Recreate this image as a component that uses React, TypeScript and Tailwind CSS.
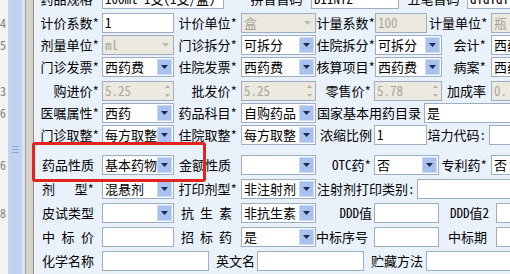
import clsx from 'clsx';
import type { ReactNode } from 'react';

type Kind = 'text' | 'combo' | 'spin';

interface FieldProps {
  className?: string;
  kind?: Kind;
  value?: string;
  disabled?: boolean;
}

function Arrow({ color }: { color: string }) {
  return (
    <svg width="7" height="4" viewBox="0 0 7 4">
      <path d="M0 0h7L3.5 4z" fill={color} />
    </svg>
  );
}

function Field({ className = '', kind = 'text', value = '', disabled = false }: FieldProps) {
  return (
    <div
      className={clsx(
        'flex h-[20px] shrink-0 items-center overflow-hidden border border-[#9eaec0]',
        disabled ? 'bg-[#ebe9e0] text-[#a9a69c]' : 'bg-white text-black',
        className,
      )}
    >
      <span className="min-w-0 flex-1 overflow-hidden whitespace-nowrap pl-[2px] leading-[18px]">{value}</span>
      {kind === 'combo' &&
        (disabled ? (
          <span className="flex h-[16px] w-[15px] shrink-0 items-center justify-center">
            <Arrow color="#bdb9ad" />
          </span>
        ) : (
          <span className="mr-[1px] flex h-[16px] w-[15px] shrink-0 items-center justify-center border border-[#c9d8f5] bg-[#a9c1ef]">
            <Arrow color="#1c2850" />
          </span>
        ))}
      {kind === 'spin' && (
        <span className="flex h-full w-[12px] shrink-0 flex-col items-center justify-between py-[3px]">
          <svg width="5" height="3" viewBox="0 0 5 3">
            <path d="M0 3h5L2.5 0z" fill="#b4b1a7" />
          </svg>
          <svg width="5" height="3" viewBox="0 0 5 3">
            <path d="M0 0h5L2.5 3z" fill="#b4b1a7" />
          </svg>
        </span>
      )}
    </div>
  );
}

function Lbl({ className = '', children }: { className?: string; children: ReactNode }) {
  return <div className={clsx('shrink-0 whitespace-nowrap leading-[20px]', className)}>{children}</div>;
}

function Spaced({ className = '', parts }: { className?: string; parts: string[] }) {
  return (
    <div className={clsx('flex shrink-0 justify-between whitespace-nowrap leading-[20px]', className)}>
      {parts.map((p) => (
        <span key={p}>{p}</span>
      ))}
    </div>
  );
}

function Row({ className = '', children }: { className?: string; children: ReactNode }) {
  return <div className={clsx('flex h-[20px] shrink-0 items-center', className)}>{children}</div>;
}

export default function App() {
  return (
    <div className="relative flex h-[274px] w-[510px] overflow-hidden bg-[#e9f2fb] font-['Noto_Sans_Mono_CJK_SC','Noto_Sans_CJK_SC',sans-serif] text-[13px] text-black">
      {/* left list edge + scrollbar */}
      <div className="flex h-full w-[35px] shrink-0">
        <div className="flex w-[8px] flex-col overflow-hidden bg-[#f3f3f3] text-[12px] leading-[20px] text-[#7d7d7d]">
          <span className="mt-[13px] h-[20px]">4</span>
          <span className="mt-[2px] h-[20px]">5</span>
          <span className="mt-[26px] h-[20px]">3</span>
          <span className="mt-[2px] h-[20px]">6:</span>
          <span className="mt-[32px] h-[20px]">6·</span>
          <span className="mt-[28px] h-[20px]">8</span>
        </div>
        <div className="w-[1px] bg-[#cfd6e2]" />
        <div className="flex w-[13px] flex-col items-center bg-[#c2d3f1]">
          <div className="mt-[146px] flex w-[7px] flex-col gap-[2px]">
            <div className="h-[1px] bg-[#8ea6d3]" />
            <div className="h-[1px] bg-[#8ea6d3]" />
            <div className="h-[1px] bg-[#8ea6d3]" />
          </div>
        </div>
        <div className="w-[3px] bg-[#dbe4f2]" />
        <div className="w-[1px] bg-[#9a9a9a]" />
        <div className="w-[7px] bg-[#d6d2ca]" />
        <div className="w-[1px] bg-[#8a8a8a]" />
        <div className="w-[1px] bg-[#f4f4f4]" />
      </div>

      {/* form */}
      <div className="min-w-0 flex-1 overflow-hidden">
        <div className="-ml-[1px] -mt-[11px] flex flex-col">
          <Row>
            <Lbl className="w-[68px] pr-[3px] text-right">药品规格*</Lbl>
            <Field className="w-[122px]" value="100ml*1支(1支/盒)" />
            <Lbl className="w-[87px] pr-[2px] text-right">拼音首码*</Lbl>
            <Field className="w-[88px]" value="DIINTZ" />
            <Lbl className="w-[68px] pr-[1px] text-right">五笔首码*</Lbl>
            <Field className="w-[60px]" value="dididi" />
          </Row>

          <Row className="mt-[4px]">
            <Lbl className="w-[68px] pr-[3px] text-right">计价系数*</Lbl>
            <Field className="w-[72px]" value="1" />
            <Lbl className="w-[67px] pr-[4px] text-right">计价单位*</Lbl>
            <Field className="w-[75px]" kind="combo" disabled value="盒" />
            <Lbl className="w-[59px] text-right">计量系数*</Lbl>
            <Field className="w-[52px]" disabled value="100" />
            <Lbl className="w-[64px] pl-[2px]">计量单位*</Lbl>
            <Field className="w-[40px]" disabled value="瓶" />
          </Row>

          <Row className="mt-[2px]">
            <Lbl className="w-[68px] pr-[3px] text-right">剂量单位*</Lbl>
            <Field className="w-[72px]" kind="combo" disabled value="ml" />
            <Lbl className="w-[67px] pr-[4px] text-right">门诊拆分*</Lbl>
            <Field className="w-[75px]" kind="combo" value="可拆分" />
            <Lbl className="w-[59px] text-right">住院拆分*</Lbl>
            <Field className="w-[67px]" kind="combo" value="可拆分" />
            <Lbl className="w-[49px] pr-[5px] text-right">会计*</Lbl>
            <Field className="w-[40px]" value="西药" />
          </Row>

          <Row className="mt-[2px]">
            <Lbl className="w-[68px] pr-[3px] text-right">门诊发票*</Lbl>
            <Field className="w-[72px]" kind="combo" value="西药费" />
            <Lbl className="w-[67px] pr-[4px] text-right">住院发票*</Lbl>
            <Field className="w-[75px]" kind="combo" value="西药费" />
            <Lbl className="w-[59px] text-right">核算项目*</Lbl>
            <Field className="w-[67px]" kind="combo" value="西药费" />
            <Lbl className="w-[49px] pr-[5px] text-right">病案*</Lbl>
            <Field className="w-[40px]" value="西药" />
          </Row>

          <Row className="mt-[4px]">
            <Lbl className="w-[68px] pr-[3px] text-right">购进价*</Lbl>
            <Field className="w-[72px]" kind="spin" disabled value="5.25" />
            <Lbl className="w-[67px] pr-[4px] text-right">批发价*</Lbl>
            <Field className="w-[75px]" kind="spin" disabled value="5.25" />
            <Lbl className="w-[58px] pr-[3px] text-right">零售价*</Lbl>
            <Field className="w-[68px]" kind="spin" disabled value="5.78" />
            <Lbl className="w-[49px] pr-[5px] text-right">加成率</Lbl>
            <Field className="w-[40px]" disabled value="0." />
          </Row>

          <Row className="mt-[2px]">
            <Lbl className="w-[68px] pr-[3px] text-right">医嘱属性*</Lbl>
            <Field className="w-[72px]" kind="combo" value="西药" />
            <Lbl className="w-[67px] pr-[4px] text-right">药品科目*</Lbl>
            <Field className="w-[75px]" kind="combo" value="自购药品" />
            <Lbl className="w-[108px] pl-[1px]">国家基本用药目录</Lbl>
            <Field className="w-[90px]" value="是" />
          </Row>

          <Row className="mt-[2px]">
            <Lbl className="w-[68px] pr-[3px] text-right">门诊取整*</Lbl>
            <Field className="w-[72px]" kind="combo" value="每方取整" />
            <Lbl className="w-[67px] pr-[4px] text-right">住院取整*</Lbl>
            <Field className="w-[75px]" kind="combo" value="每方取整" />
            <Lbl className="w-[58px] pr-[2px] text-right">浓缩比例</Lbl>
            <Field className="w-[53px]" value="1" />
            <Lbl className="w-[62px] pr-[3px] text-right">培力代码:</Lbl>
            <Field className="w-[40px]" />
          </Row>

          <Row className="mt-[10px]">
            <Lbl className="w-[68px] pl-[8px]">药品性质</Lbl>
            <Field className="w-[72px]" kind="combo" value="基本药物" />
            <Lbl className="w-[67px] pl-[5px]">金额性质</Lbl>
            <Field className="w-[75px]" kind="combo" />
            <Lbl className="w-[58px] pr-[3px] text-right">OTC药*</Lbl>
            <Field className="w-[65px]" kind="combo" value="否" />
            <Lbl className="w-[52px] pr-[4px] text-right">专利药*</Lbl>
            <Field className="w-[40px]" value="否" />
          </Row>

          <Row className="mt-[4px]">
            <Spaced className="w-[68px] pl-[8px] pr-[8px]" parts={['剂', '型*']} />
            <Field className="w-[72px]" kind="combo" value="混悬剂" />
            <Lbl className="w-[67px] pr-[4px] text-right">打印剂型*</Lbl>
            <Field className="w-[75px]" kind="combo" value="非注射剂" />
            <Lbl className="w-[101px] pl-[1px]">注射剂打印类别:</Lbl>
            <Field className="w-[100px]" />
          </Row>

          <Row className="mt-[4px]">
            <Lbl className="w-[68px] pl-[8px]">皮试类型</Lbl>
            <Field className="w-[72px]" kind="combo" />
            <Spaced className="w-[67px] pl-[7px] pr-[9px]" parts={['抗', '生', '素']} />
            <Field className="w-[75px]" kind="combo" value="非抗生素" />
            <Lbl className="w-[58px] pr-[2px] text-right">DDD值</Lbl>
            <Field className="w-[65px]" />
            <Lbl className="w-[57px] pr-[7px] text-right">DDD值2</Lbl>
            <Field className="w-[40px]" />
          </Row>

          <Row className="mt-[4px]">
            <Spaced className="w-[68px] pl-[8px] pr-[8px]" parts={['中', '标', '价']} />
            <Field className="w-[72px]" />
            <Spaced className="w-[67px] pl-[7px] pr-[9px]" parts={['招', '标', '药']} />
            <Field className="w-[75px]" kind="combo" value="是" />
            <Lbl className="w-[58px]">中标序号</Lbl>
            <Field className="w-[65px]" />
            <Lbl className="w-[57px] pr-[9px] text-right">中标期</Lbl>
            <Field className="w-[40px]" />
          </Row>

          <Row className="mt-[4px]">
            <Lbl className="w-[68px] pl-[8px]">化学名称</Lbl>
            <Field className="w-[107px]" />
            <Lbl className="w-[48px] pl-[7px]">英文名</Lbl>
            <Field className="w-[107px]" />
            <Lbl className="w-[62px] pl-[7px]">贮藏方法</Lbl>
            <Field className="w-[100px]" />
          </Row>
        </div>
      </div>

      {/* highlight annotation */}
      <div className="absolute left-[32px] top-[142px] h-[40px] w-[174px] rounded-[3px] border-[3px] border-[#e3231d]" />
    </div>
  );
}
